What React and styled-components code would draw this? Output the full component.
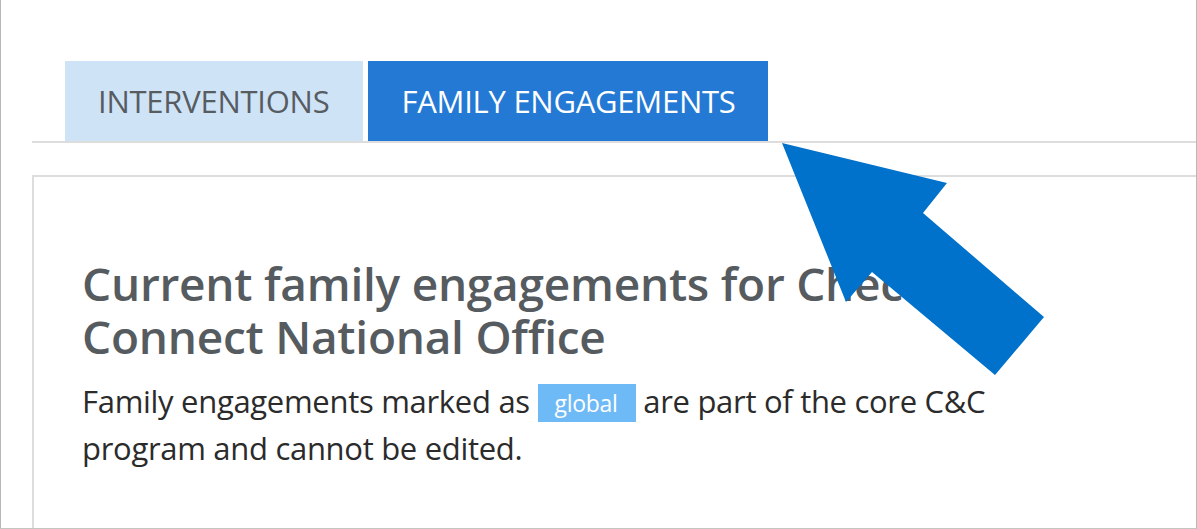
import React from 'react';
import styled, { createGlobalStyle } from 'styled-components';

const GlobalStyle = createGlobalStyle`
  html, body {
    margin: 0;
    padding: 0;
    background: #ffffff;
  }
  body {
    font-family: 'Open Sans', 'Noto Sans', 'Liberation Sans', sans-serif;
  }
`;

const App = () => {
  return (
    <Frame>
      <GlobalStyle />
      <TabList>
        <Tab>INTERVENTIONS</Tab>
        <Tab active>FAMILY ENGAGEMENTS</Tab>
      </TabList>
      <Panel>
        <Title>
          Current family engagements for Check &amp; Connect National Office
        </Title>
        <Intro>
          Family engagements marked as <Badge>global</Badge> are part of the
          core C&amp;C program and cannot be edited.
        </Intro>
      </Panel>
      <Arrow viewBox="0 0 290 250" width="290" height="250">
        <polygon
          points="11,8 176,48 152,78 273,182 224,240 101,137 75,167"
          fill="#0072cc"
        />
      </Arrow>
    </Frame>
  );
};

export default App;

const Frame = styled.div`
  position: relative;
  box-sizing: border-box;
  width: 1197px;
  height: 529px;
  padding: 61px 0 0 31px;
  overflow: hidden;
  border-left: 1px solid #b8b8b8;
  border-right: 1px solid #b8b8b8;
  border-bottom: 1px solid #c4c4c4;
`;

const TabList = styled.div`
  display: flex;
  gap: 5px;
  padding-left: 33px;
  border-bottom: 2px solid #dddddd;
`;

const Tab = styled.div`
  height: 80px;
  padding: ${(p) => (p.active ? '0 32px 0 33px' : '0 34px 0 33px')};
  display: flex;
  align-items: center;
  font-size: 31px;
  letter-spacing: -0.25px;
  color: ${(p) => (p.active ? '#ffffff' : '#575c61')};
  background-color: ${(p) => (p.active ? '#2379d4' : '#cfe3f7')};
`;

const Panel = styled.div`
  width: 1300px;
  height: 400px;
  margin-top: 32px;
  padding: 80px 50px 0 48px;
  border: 2px solid #dddddd;
  border-right: none;
`;

const Title = styled.h1`
  width: 1000px;
  margin: 0 0 15px 0;
  font-size: 46px;
  font-weight: 600;
  line-height: 53px;
  letter-spacing: -0.25px;
  color: #555b5f;
`;

const Intro = styled.p`
  width: 940px;
  margin: 0;
  font-size: 31px;
  line-height: 47px;
  letter-spacing: -0.3px;
  color: #2b2b2b;
`;

const Badge = styled.span`
  display: inline-block;
  padding: 0 18px 0 17px;
  line-height: 38px;
  font-size: 23px;
  color: #ffffff;
  background-color: #6ebaf7;
  vertical-align: 1px;
`;

const Arrow = styled.svg`
  position: absolute;
  left: 770px;
  top: 135px;
  pointer-events: none;
`;
